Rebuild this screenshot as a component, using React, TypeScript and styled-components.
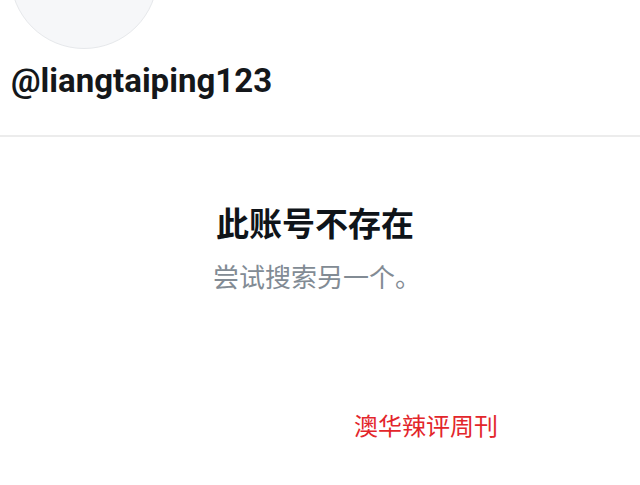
import React from "react";
import styled, { createGlobalStyle } from "styled-components";

const Global = createGlobalStyle`
  html, body { margin: 0; padding: 0; background: #ffffff; }
  body { width: 640px; height: 485px; overflow: hidden; font-family: Roboto, "Noto Sans", "Noto Sans CJK SC", sans-serif; }
`;

const Page = styled.div`
  position: relative;
  width: 640px;
  height: 485px;
  background: #ffffff;
  overflow: hidden;
`;

const Header = styled.header`
  height: 135px;
  border-bottom: 2px solid #ececec;
  box-sizing: content-box;
  display: flex;
  flex-direction: column;
  align-items: flex-start;
`;

const Avatar = styled.div`
  width: 146px;
  height: 146px;
  margin-top: -99px;
  margin-left: 10px;
  border-radius: 50%;
  background: #f6f7f9;
  border: 1px solid #e6e8eb;
  flex-shrink: 0;
`;

const Handle = styled.div`
  margin: 13px 0 0 11px;
  font-family: Roboto, "Noto Sans", sans-serif;
  font-weight: 700;
  font-size: 33px;
  line-height: 38px;
  color: #14171a;
  letter-spacing: 0;
`;

const Empty = styled.section`
  display: flex;
  flex-direction: column;
  align-items: center;
  padding: 65px 10px 0 0;
`;

const Title = styled.h1`
  margin: 0;
  font-family: "Noto Sans CJK SC", sans-serif;
  font-weight: 700;
  font-size: 33px;
  line-height: 40px;
  color: #0f1419;
`;

const Subtitle = styled.p`
  margin: 18px 0 0 4px;
  font-family: "Noto Sans CJK SC", sans-serif;
  font-weight: 400;
  font-size: 26px;
  line-height: 32px;
  color: #828b94;
`;

const Watermark = styled.div`
  position: absolute;
  left: 354px;
  top: 409px;
  font-family: "Noto Sans CJK SC", sans-serif;
  font-size: 24px;
  line-height: 32px;
  color: #e3262b;
`;

export default function App() {
  return (
    <Page>
      <Global />
      <Header>
        <Avatar />
        <Handle>@liangtaiping123</Handle>
      </Header>
      <Empty>
        <Title>此账号不存在</Title>
        <Subtitle>尝试搜索另一个。</Subtitle>
      </Empty>
      <Watermark>澳华辣评周刊</Watermark>
    </Page>
  );
}
